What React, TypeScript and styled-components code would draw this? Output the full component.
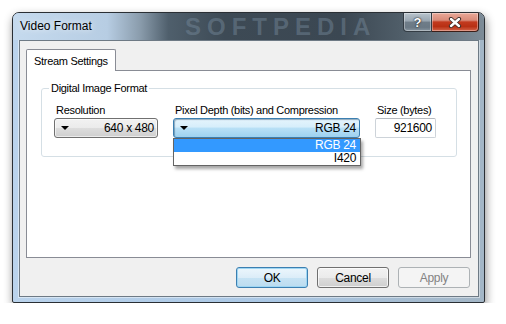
import React from 'react';
import styled, { createGlobalStyle } from 'styled-components';

const GlobalStyle = createGlobalStyle`
  body {
    margin: 0;
    background: #ffffff;
    font-family: "Liberation Sans", Arial, sans-serif;
    font-size: 11px;
    letter-spacing: -0.3px;
    color: #000000;
  }
`;

const Page = styled.div`
  padding: 12px 0 0 12px;
`;

const Window = styled.div`
  position: relative;
  width: 473px;
  height: 291px;
  box-sizing: border-box;
  border: 1px solid #2a2f34;
  border-radius: 7px 7px 2px 2px;
  box-shadow: 1px 4px 10px rgba(0, 0, 0, 0.45);
  background: linear-gradient(90deg, #bad3ec 0%, #aac7e4 55%, #a3b6c6 100%);
  display: flex;
  flex-direction: column;
  overflow: hidden;
`;

const TitleBar = styled.div`
  position: relative;
  height: 27px;
  flex: none;
  display: flex;
  align-items: flex-start;
  background: linear-gradient(
    90deg,
    #c5daee 0%,
    #b7cde3 20%,
    #8a9cac 27%,
    #4f5f6c 33%,
    #3d4a55 45%,
    #3b4752 70%,
    #4f5d68 82%,
    #7d8c98 100%
  );
`;

const TitleText = styled.span`
  position: relative;
  z-index: 1;
  padding: 6px 0 0 7px;
  font-size: 12px;
  letter-spacing: 0;
  line-height: 14px;
  color: #000000;
  text-shadow: 0 0 6px rgba(255, 255, 255, 0.9);
`;

const TitleMark = styled.span`
  position: absolute;
  left: 172px;
  top: 0;
  font-size: 24px;
  line-height: 27px;
  font-weight: bold;
  letter-spacing: 6px;
  color: rgba(120, 140, 158, 0.45);
`;

const CaptionButtons = styled.div`
  position: relative;
  z-index: 1;
  display: flex;
  margin-left: auto;
  margin-right: 5px;
`;

const CaptionButton = styled.div<{ $close?: boolean }>`
  width: ${p => (p.$close ? 47 : 29)}px;
  height: 19px;
  box-sizing: border-box;
  border: 1px solid ${p => (p.$close ? '#3b1e18' : '#333c44')};
  border-top: none;
  border-left: ${p => (p.$close ? 'none' : '1px solid #333c44')};
  border-radius: ${p => (p.$close ? '0 0 4px 0' : '0 0 0 4px')};
  background: ${p =>
    p.$close
      ? 'linear-gradient(180deg, #e9a898 0%, #d98b79 40%, #c23a1f 50%, #b83014 75%, #d3654a 100%)'
      : 'linear-gradient(180deg, #b9c4cd 0%, #98a5b0 45%, #6f7d89 50%, #6b7985 80%, #8896a1 100%)'};
  box-shadow: inset 0 0 0 1px rgba(255, 255, 255, 0.35);
  display: flex;
  align-items: center;
  justify-content: center;
  color: #ffffff;
  font-weight: bold;
  font-size: 13px;
  letter-spacing: 0;
  text-shadow: 0 0 2px #222, 0 0 1px #222;
`;

const Client = styled.div`
  flex: 1;
  margin: 0 5px 5px 6px;
  border: 1px solid #6e7a85;
  box-shadow: 0 0 0 1px rgba(255, 255, 255, 0.45);
  background: #f0f0f0;
  padding: 8px 7px 8px 6px;
  display: flex;
  flex-direction: column;
`;

const TabStrip = styled.div`
  display: flex;
  height: 22px;
  margin-bottom: -1px;
  position: relative;
  z-index: 1;
`;

const Tab = styled.div`
  width: 90px;
  box-sizing: border-box;
  border: 1px solid #898c95;
  border-bottom: none;
  border-radius: 2px 2px 0 0;
  background: #ffffff;
  padding: 4px 0 0 7px;
  line-height: 14px;
  white-space: nowrap;
`;

const TabPanel = styled.div`
  height: 188px;
  box-sizing: border-box;
  border: 1px solid #898c95;
  background: #ffffff;
  padding: 10px 0 0 14px;
`;

const GroupBox = styled.fieldset`
  margin: 0;
  width: 416px;
  box-sizing: border-box;
  border: 1px solid #d5dfe5;
  border-radius: 3px;
  padding: 8px 0 18px 12px;
`;

const GroupLegend = styled.legend`
  margin-left: -5px;
  padding: 0 2px;
  line-height: 14px;
  color: #000000;
`;

const FieldRow = styled.div`
  display: flex;
  gap: 15px;
`;

const Field = styled.div<{ $width: number }>`
  position: relative;
  width: ${p => p.$width}px;
  display: flex;
  flex-direction: column;
`;

const FieldLabel = styled.div`
  line-height: 14px;
  margin: 0 0 1px 2px;
  white-space: nowrap;
`;

const Combo = styled.div<{ $active?: boolean }>`
  height: 20px;
  box-sizing: border-box;
  border: 1px solid ${p => (p.$active ? '#3c7fb1' : '#707070')};
  border-radius: 3px;
  background: ${p =>
    p.$active
      ? 'linear-gradient(180deg, #e5f4fc 0%, #d6eefb 45%, #b9e0f6 50%, #9dd2f0 100%)'
      : 'linear-gradient(180deg, #f2f2f2 0%, #ebebeb 50%, #dddddd 50%, #cfcfcf 100%)'};
  box-shadow: ${p =>
    p.$active ? 'inset 1px 1px 1px rgba(40, 80, 110, 0.45)' : 'inset 0 0 0 1px rgba(255,255,255,0.6)'};
  display: flex;
  align-items: center;
  padding: 0 3px 0 6px;
`;

const Arrow = styled.span`
  width: 0;
  height: 0;
  border-left: 4px solid transparent;
  border-right: 4px solid transparent;
  border-top: 4px solid #000000;
`;

const ComboValue = styled.span`
  margin-left: auto;
  line-height: 14px;
  font-size: 12px;
`;

const DropList = styled.div`
  position: absolute;
  top: 100%;
  left: 0;
  width: 188px;
  box-sizing: border-box;
  border: 1px solid #646464;
  background: #ffffff;
  box-shadow: 2px 3px 3px rgba(0, 0, 0, 0.35);
  z-index: 2;
`;

const DropItem = styled.div<{ $selected?: boolean }>`
  height: 13px;
  line-height: 13px;
  font-size: 12px;
  text-align: right;
  padding-right: 4px;
  background: ${p => (p.$selected ? '#3399ff' : '#ffffff')};
  color: ${p => (p.$selected ? '#ffffff' : '#000000')};
`;

const TextBox = styled.div`
  height: 20px;
  box-sizing: border-box;
  border: 1px solid #cdd3d9;
  border-top-color: #b5bac0;
  border-radius: 2px;
  background: #ffffff;
  text-align: right;
  padding: 2px 3px 0 0;
  line-height: 14px;
  font-size: 12px;
`;

const ButtonRow = styled.div`
  display: flex;
  justify-content: flex-end;
  gap: 9px;
  margin-top: 9px;
  padding-right: 1px;
`;

const DialogButton = styled.div<{ $variant?: 'default' | 'disabled' }>`
  width: 72px;
  height: 21px;
  box-sizing: border-box;
  border-radius: 3px;
  display: flex;
  align-items: center;
  justify-content: center;
  font-size: 12px;
  border: 1px solid
    ${p =>
      p.$variant === 'default' ? '#3c7fb1' : p.$variant === 'disabled' ? '#adb2b5' : '#707070'};
  background: ${p =>
    p.$variant === 'default'
      ? 'linear-gradient(180deg, #ecf6fc 0%, #dcedf8 50%, #c7e3f4 50%, #bcdcef 100%)'
      : p.$variant === 'disabled'
      ? '#f4f4f4'
      : 'linear-gradient(180deg, #f2f2f2 0%, #ebebeb 50%, #dddddd 50%, #cfcfcf 100%)'};
  box-shadow: ${p =>
    p.$variant === 'default'
      ? 'inset 0 0 0 1px #9ed6f3'
      : p.$variant === 'disabled'
      ? 'none'
      : 'inset 0 0 0 1px rgba(255,255,255,0.7)'};
  color: ${p => (p.$variant === 'disabled' ? '#838383' : '#000000')};
`;

function CloseGlyph() {
  return (
    <svg width="14" height="11" viewBox="0 0 14 11">
      <path d="M3 2 L11 9 M11 2 L3 9" stroke="#3a2a26" strokeWidth="4.2" strokeLinecap="round" />
      <path d="M3 2 L11 9 M11 2 L3 9" stroke="#ffffff" strokeWidth="2.4" strokeLinecap="round" />
    </svg>
  );
}

export default function App() {
  return (
    <Page>
      <GlobalStyle />
      <Window>
        <TitleBar>
          <TitleMark>SOFTPEDIA</TitleMark>
          <TitleText>Video Format</TitleText>
          <CaptionButtons>
            <CaptionButton>?</CaptionButton>
            <CaptionButton $close>
              <CloseGlyph />
            </CaptionButton>
          </CaptionButtons>
        </TitleBar>
        <Client>
          <TabStrip>
            <Tab>Stream Settings</Tab>
          </TabStrip>
          <TabPanel>
            <GroupBox>
              <GroupLegend>Digital Image Format</GroupLegend>
              <FieldRow>
                <Field $width={104}>
                  <FieldLabel>Resolution</FieldLabel>
                  <Combo>
                    <Arrow />
                    <ComboValue>640 x 480</ComboValue>
                  </Combo>
                </Field>
                <Field $width={187}>
                  <FieldLabel>Pixel Depth (bits) and Compression</FieldLabel>
                  <Combo $active>
                    <Arrow />
                    <ComboValue>RGB 24</ComboValue>
                  </Combo>
                  <DropList>
                    <DropItem $selected>RGB 24</DropItem>
                    <DropItem>I420</DropItem>
                  </DropList>
                </Field>
                <Field $width={61}>
                  <FieldLabel>Size (bytes)</FieldLabel>
                  <TextBox>921600</TextBox>
                </Field>
              </FieldRow>
            </GroupBox>
          </TabPanel>
          <ButtonRow>
            <DialogButton $variant="default">OK</DialogButton>
            <DialogButton>Cancel</DialogButton>
            <DialogButton $variant="disabled">Apply</DialogButton>
          </ButtonRow>
        </Client>
      </Window>
    </Page>
  );
}
